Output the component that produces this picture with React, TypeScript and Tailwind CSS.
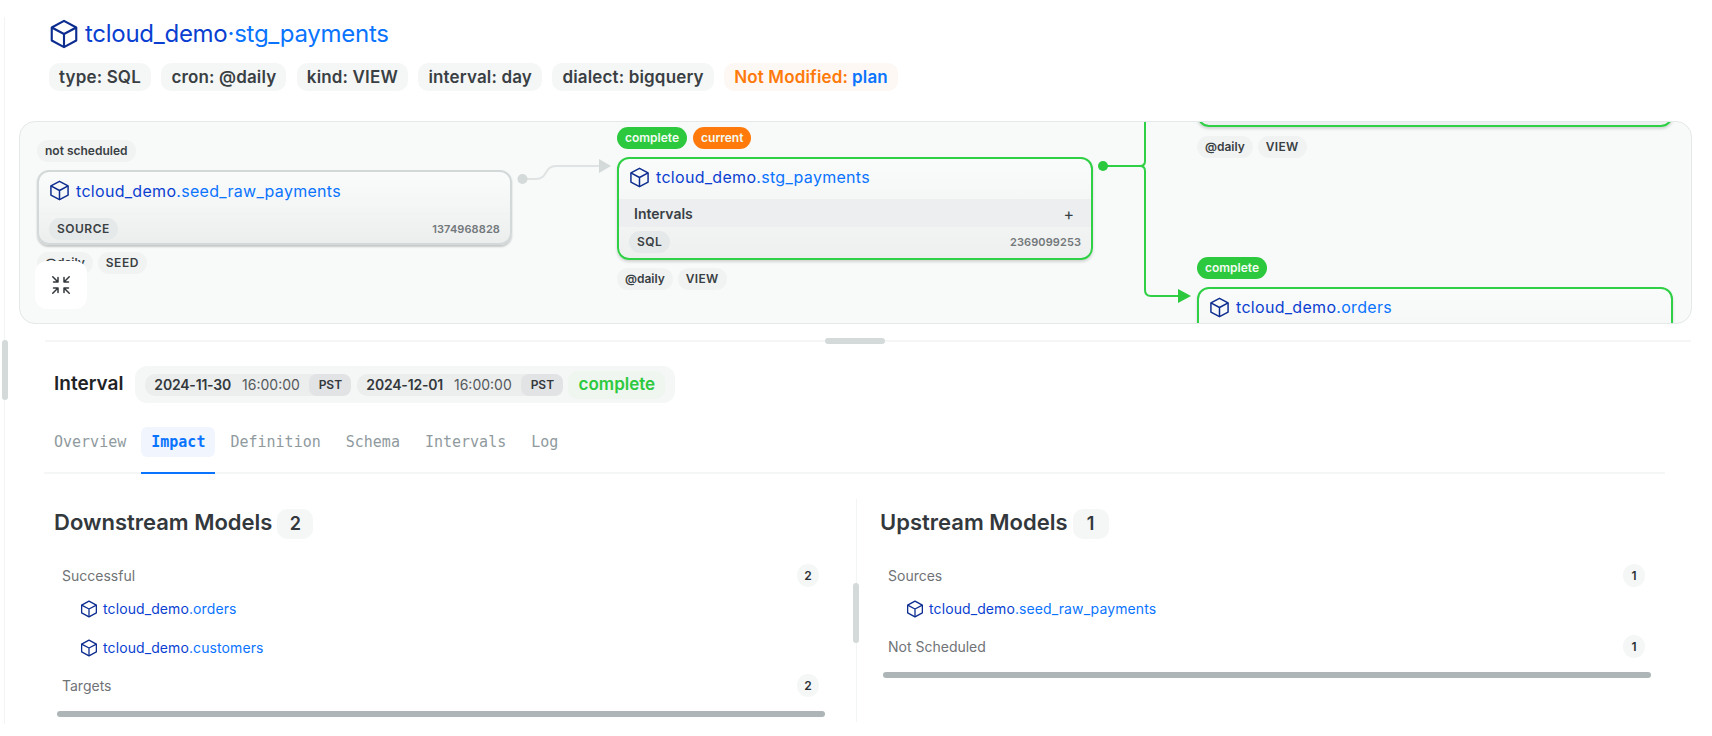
import React from "react";
import { HiOutlineArrowsPointingIn } from "react-icons/hi2";

const Cube = ({ className }: { className: string }) => (
  <svg viewBox="0 0 24 24" fill="none" stroke="#0c2d8f" strokeWidth={1.7} strokeLinejoin="round" className={`shrink-0 ${className}`}>
    <path d="M12 1.5 21.8 6.8V17.2L12 22.5 2.2 17.2V6.8Z" />
    <path d="M2.2 6.8 12 12 21.8 6.8M12 12V22.5" />
  </svg>
);

const ModelName = ({ name, sep = "." }: { name: string; sep?: string }) => (
  <span className="text-[#0a3fd1]">
    tcloud_demo
    <span className="text-[#0a74ff]">
      {sep}
      {name}
    </span>
  </span>
);

const Pill = ({ children, className = "bg-[#f1f3f3]" }: { children: React.ReactNode; className?: string }) => (
  <span className={`flex h-[22px] items-center rounded-[11px] px-2 text-xs font-semibold text-[#3a3f44] ${className}`}>
    {children}
  </span>
);

const StatusPill = ({ children, className }: { children: React.ReactNode; className: string }) => (
  <span className={`flex h-[22px] items-center rounded-[11px] px-2 text-xs font-semibold text-[#f2fbf3] ${className}`}>
    {children}
  </span>
);

const HeaderPill = ({ children }: { children: React.ReactNode }) => (
  <span className="flex h-[28px] items-center rounded-[10px] bg-[#f5f7f7] px-[10px] pt-px text-[17px] font-semibold tracking-[0.15px] text-[#3a3f44]">
    {children}
  </span>
);

const Footer = ({ label, hash }: { label: string; hash: string }) => (
  <div className="flex h-[31px] items-center justify-between pl-[10px] pr-[10px]">
    <Pill className="-mt-[2px] bg-[#e6e9e9] tracking-[0.5px]">{label}</Pill>
    <span className="text-[11px] font-semibold tracking-[0.1px] text-[#73787b]">{hash}</span>
  </div>
);

const GreenNode = ({ children }: { children: React.ReactNode }) => (
  <div className="w-[476px] overflow-hidden rounded-xl border-2 border-[#2fd045] bg-gradient-to-b from-[#fafbfb] via-[#f4f5f5] to-[#eef0f0] shadow-[0_2px_3px_rgba(0,0,0,0.15)]">
    {children}
  </div>
);

const NodeTitle = ({ name }: { name: string }) => (
  <div className="flex h-[40px] items-center pb-[4px] pl-[10px] text-base tracking-[0.3px]">
    <Cube className="mr-[6px] h-[21px] w-[21px]" />
    <ModelName name={name} />
  </div>
);

const Section = ({ title, count, children }: { title: string; count: number; children?: React.ReactNode }) => (
  <div className="pb-[7px]">
    <div className="flex h-[23px] items-center justify-between pl-[5px] pr-[6px]">
      <span className="text-sm text-[#6f7376]">{title}</span>
      <span className="flex h-[23px] w-[22px] items-center justify-center rounded-full bg-[#f5f7f7] text-xs font-semibold text-[#2c3034]">
        {count}
      </span>
    </div>
    {children && <div className="pt-[2px]">{children}</div>}
  </div>
);

const ModelRow = ({ name }: { name: string }) => (
  <div className="flex h-[39px] items-center pl-[23px] text-sm tracking-[0.1px]">
    <Cube className="mr-[5px] h-[18px] w-[18px]" />
    <ModelName name={name} />
  </div>
);

const ModelsPanel = ({ title, count, children, className, listClass }: { title: string; count: number; children: React.ReactNode; className: string; listClass: string }) => (
  <section className={className}>
    <div className="flex h-[30px] items-center gap-[5px]">
      <h3 className="pb-[4px] text-[22px] font-semibold text-[#33383c]">{title}</h3>
      <span className="flex h-[30px] w-[36px] items-center justify-center rounded-[10px] bg-[#f5f7f7] text-lg font-semibold text-[#33383c]">
        {count}
      </span>
    </div>
    <div className={`mt-[25px] w-[768px] ${listClass}`}>
      {children}
      <div className="mt-[7px] h-[6px] rounded-full bg-[#adb5b7]" />
    </div>
  </section>
);

const tabs = ["Overview", "Impact", "Definition", "Schema", "Intervals", "Log"];

const DateTime = ({ date }: { date: string }) => (
  <span className="flex h-[22px] w-[206px] items-center rounded-[10px] bg-[#eceeee] pl-[9px] text-sm text-[#55595c]">
    <b className="font-semibold tracking-[-0.2px] text-[#33383c]">{date}</b>
    <span className="ml-[11px]">16:00:00</span>
    <span className="ml-auto flex h-[22px] w-[42px] items-center justify-center rounded-[8px] bg-[#e1e3e5] text-xs font-semibold text-[#33383c]">
      PST
    </span>
  </span>
);

export default function App() {
  return (
    <div className="relative h-[736px] w-[1712px] overflow-hidden bg-white font-['Inter',sans-serif]">
      <div className="absolute left-[4px] top-[17px] h-[707px] border-l border-[#f3f4f4]" />
      <div className="absolute left-[2px] top-[340px] h-[60px] w-[6px] rounded-full bg-[#d4d9d9]" />

      <header className="pl-[49px] pt-[20px]">
        <div className="flex h-[27px] items-center text-2xl tracking-[-0.27px]">
          <Cube className="mr-[6px] h-[30px] w-[30px]" />
          <ModelName name="stg_payments" sep="·" />
        </div>
        <div className="mt-[16px] flex gap-[10.5px]">
          <HeaderPill>type: SQL</HeaderPill>
          <HeaderPill>cron: @daily</HeaderPill>
          <HeaderPill>kind: VIEW</HeaderPill>
          <HeaderPill>interval: day</HeaderPill>
          <HeaderPill>dialect: bigquery</HeaderPill>
          <span className="flex h-[28px] items-center rounded-[10px] bg-[#fdf8f4] px-[10px] pt-px text-[17px] font-semibold tracking-[0.15px] text-[#ff7a0a]">
            Not Modified:<span className="ml-1 text-[#0a74ff]">plan</span>
          </span>
        </div>
      </header>

      <div className="relative ml-[19px] mt-[30px] h-[203px] w-[1673px] overflow-hidden rounded-2xl border border-[#e5e8e8] bg-[#f8f9f9]">
        <svg className="absolute inset-0 h-full w-full" fill="none">
          <path d="M502 57H516C528 57 524 44 536 44H580" stroke="#dfe3e3" strokeWidth={2} />
          <circle cx="502.500" cy="57" r="5" fill="#d4d9d9" />
          <path d="M579 37V51L591 44Z" fill="#d4d9d9" />
          <path d="M1083 44H1120C1123 44 1125 42 1125 39V-5" stroke="#2fd045" strokeWidth={2} />
          <path d="M1083 44H1120C1123 44 1125 46 1125 49V168C1125 172 1127 174 1131 174H1160" stroke="#2fd045" strokeWidth={2} />
          <circle cx="1083" cy="44" r="5" fill="#2cc93e" />
          <path d="M1158 167V181L1171 174Z" fill="#2cc93e" />
        </svg>

        <div className="absolute left-[17px] top-[18px] flex w-[475px] flex-col items-start">
          <Pill>not scheduled</Pill>
          <div className="mt-[8px] h-[75px] w-full rounded-xl border-2 border-[#d3d8d8] bg-gradient-to-b from-[#fafbfb] via-[#f4f5f5] to-[#eceeee] shadow-[0_2px_2px_rgba(0,0,0,0.2)]">
            <div className="flex h-[42px] items-center border-b border-[#f0f2f2] pb-[4px] pl-[10px] text-base tracking-[0.3px]">
              <Cube className="mr-[6px] h-[21px] w-[21px]" />
              <ModelName name="seed_raw_payments" />
            </div>
            <Footer label="SOURCE" hash="1374968828" />
          </div>
          <div className="mt-[7px] flex gap-[5px]">
            <Pill>@daily</Pill>
            <Pill className="bg-[#f1f3f3] tracking-[0.5px]">SEED</Pill>
          </div>
        </div>

        <button className="absolute left-[15px] top-[139px] flex h-[48px] w-[52px] items-center justify-center rounded-xl bg-white text-[#33383c]">
          <HiOutlineArrowsPointingIn size={24} />
        </button>

        <div className="absolute left-[597px] top-[5px] flex flex-col items-start">
          <div className="flex gap-[6px]">
            <StatusPill className="bg-[#2cc93e]">complete</StatusPill>
            <StatusPill className="bg-[#ff7a0a]">current</StatusPill>
          </div>
          <div className="mt-[8px]">
            <GreenNode>
              <NodeTitle name="stg_payments" />
              <div className="flex h-[28px] items-center justify-between bg-[#eceeef] pl-[15px] pr-[17px] pt-[1px] text-sm font-semibold text-[#3a3f44]">
                <span>Intervals</span>
                <span className="text-base font-normal">+</span>
              </div>
              <Footer label="SQL" hash="2369099253" />
            </GreenNode>
          </div>
          <div className="mt-[8px] flex gap-[5px]">
            <Pill>@daily</Pill>
            <Pill className="bg-[#f1f3f3] tracking-[0.3px]">VIEW</Pill>
          </div>
        </div>

        <div className="absolute left-[1177px] top-[-62px] flex flex-col items-start">
          <GreenNode>
            <div className="h-[63px]" />
          </GreenNode>
          <div className="mt-[9px] flex gap-[5px]">
            <Pill>@daily</Pill>
            <Pill className="bg-[#f1f3f3] tracking-[0.3px]">VIEW</Pill>
          </div>
        </div>

        <div className="absolute left-[1177px] top-[135px] flex flex-col items-start">
          <StatusPill className="bg-[#2cc93e]">complete</StatusPill>
          <div className="mt-[8px]">
            <GreenNode>
              <NodeTitle name="orders" />
              <div className="h-[60px]" />
            </GreenNode>
          </div>
        </div>
      </div>

      <div className="relative ml-[45px] mt-[16px] h-[2px] w-[1646px] bg-[#f5f6f6]">
        <div className="absolute left-[780px] top-[-2px] h-[6px] w-[60px] rounded-full bg-[#d4d9d9]" />
      </div>

      <div className="ml-[40px] w-[1625px] pt-[24px]">
        <div className="flex items-center pl-[14px]">
          <span className="text-[19px] font-semibold text-[#1f2326]">Interval</span>
          <div className="ml-[12px] flex h-[37px] w-[540px] items-center gap-[6px] rounded-xl bg-[#f5f7f6] pl-[10px]">
            <DateTime date="2024-11-30" />
            <DateTime date="2024-12-01" />
            <span className="-ml-px flex h-[28px] w-[97px] items-center justify-center rounded-[10px] bg-[#eef6ef] text-[17px] font-semibold text-[#2cc93e]">
              complete
            </span>
          </div>
        </div>

        <nav className="ml-[4px] mt-[24px] flex h-[47px] gap-[5px] border-b-2 border-[#f5f6f6] font-['DejaVu_Sans_Mono',monospace] text-[15px]">
          {tabs.map((t) =>
            t === "Impact" ? (
              <span key={t} className="-mb-[2px] border-b-2 border-[#0a74ff]">
                <span className="flex h-[30px] items-center rounded-[6px] bg-[#f1f6fe] px-[10px] font-bold text-[#0a74ff]">
                  {t}
                </span>
              </span>
            ) : (
              <span key={t} className="flex h-[30px] items-center px-[10px] text-[#8f9a9e]">
                {t}
              </span>
            ),
          )}
        </nav>

        <div className="relative mt-[25px] flex h-[223px]">
          <ModelsPanel title="Downstream Models" count={2} className="w-[817px] border-r border-[#f3f4f4] pl-[14px] pt-[10px]" listClass="ml-[3px]">
            <Section title="Successful" count={2}>
              <ModelRow name="orders" />
              <ModelRow name="customers" />
            </Section>
            <Section title="Targets" count={2} />
          </ModelsPanel>
          <ModelsPanel title="Upstream Models" count={1} className="pl-[23px] pt-[10px]" listClass="ml-[3px]">
            <Section title="Sources" count={1}>
              <ModelRow name="seed_raw_payments" />
            </Section>
            <Section title="Not Scheduled" count={1} />
          </ModelsPanel>
          <div className="absolute left-[813px] top-[84px] h-[60px] w-[6px] rounded-full bg-[#d4d9d9]" />
        </div>
      </div>
    </div>
  );
}
